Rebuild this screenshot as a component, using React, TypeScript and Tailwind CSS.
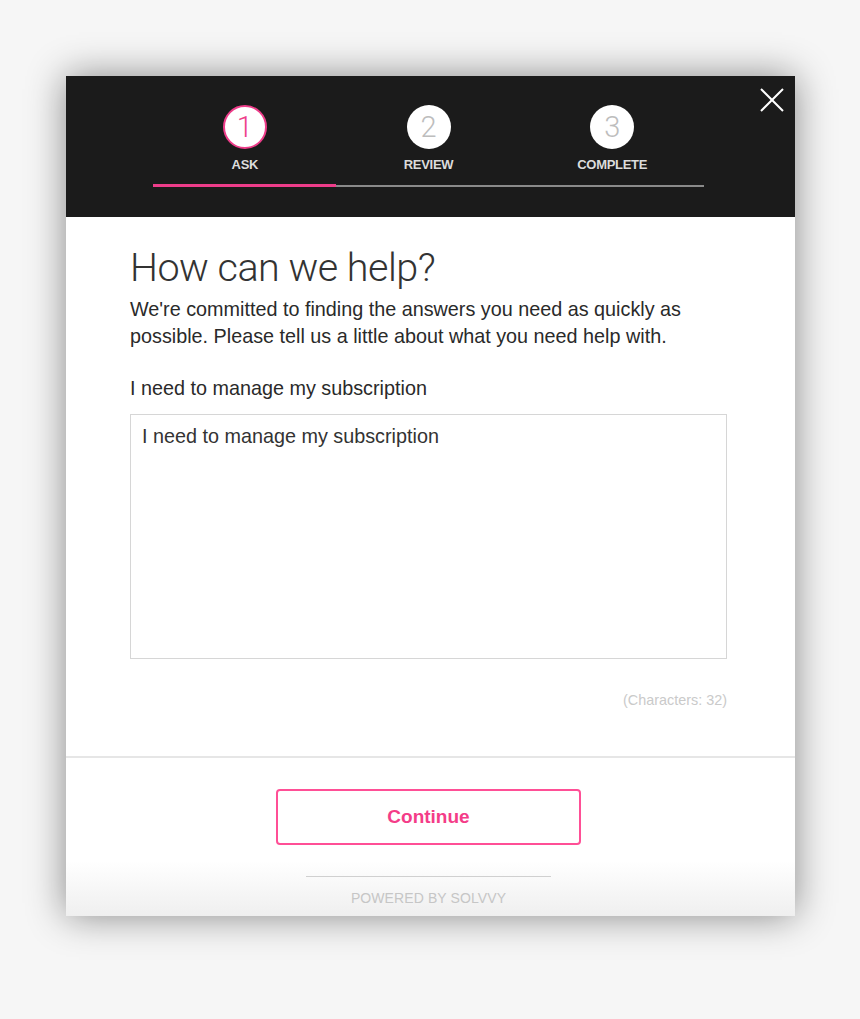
import { useState } from "react";

const STEPS = [
	{ n: 1, label: "ASK" },
	{ n: 2, label: "REVIEW" },
	{ n: 3, label: "COMPLETE" },
];

export default function App() {
	const [text, setText] = useState("I need to manage my subscription");
	const active = 1;

	return (
		<div className="min-h-[1019px] bg-[#f6f6f6] pt-[76px] pl-[66px] font-['Liberation_Sans',Arial,sans-serif]">
			<div className="w-[729px] h-[840px] flex flex-col bg-white shadow-[0_0_36px_rgba(0,0,0,0.45)]">
				{/* Header / stepper */}
				<div className="relative h-[141px] bg-[#1b1b1b] pt-[29px] pl-[87px]">
					<div className="flex w-[551px]">
						{STEPS.map((s) => (
							<div key={s.n} className="flex flex-col items-center w-[184px]">
								<div
									className={`w-[44px] h-[44px] rounded-full bg-white flex items-center justify-center text-[29px] font-['Roboto',sans-serif] font-light leading-none ${s.n === active ? "border-2 border-[#ee3d8a] text-[#ee3d8a]" : "text-[#bdbdbd]"}`}
								>
									{s.n}
								</div>
								<span className="mt-[9px] text-[13px] font-bold tracking-[-0.3px] text-[#dcdcdc] leading-none">
									{s.label}
								</span>
							</div>
						))}
					</div>
					<div className="mt-[13px] w-[551px] h-[3px] flex items-center">
						<div className="w-[183px] h-[3px] bg-[#ee3d8a]" />
						<div className="flex-1 h-[2px] bg-[#8a8a8a]" />
					</div>
					<button type="button" className="absolute top-[12px] right-[11px] w-[24px] h-[24px]">
						<svg viewBox="0 0 24 24" className="w-[24px] h-[24px]">
							<path d="M1 1 L23 23 M23 1 L1 23" stroke="#ffffff" strokeWidth="2" fill="none" />
						</svg>
					</button>
				</div>

				{/* Body */}
				<div className="flex-1 flex flex-col pl-[64px] pr-[68px] pt-[27px] border-b-2 border-[#e6e6e6]">
					<h1 className="text-[39.5px] font-['Roboto',sans-serif] font-light text-[#333] leading-[48px] tracking-[-0.5px]">
						How can we help?
					</h1>
					<p className="mt-[4px] w-[580px] text-[19.8px] leading-[27px] text-[#2a2a2a]">
						We're committed to finding the answers you need as quickly as possible. Please tell us a little about what you need help with.
					</p>
					<label className="mt-[25px] text-[19.8px] leading-[27px] text-[#2a2a2a]">
						I need to manage my subscription
					</label>
					<textarea
						value={text}
						onChange={(e) => setText(e.target.value)}
						className="mt-[12px] w-[597px] h-[245px] border border-[#d6d6d6] px-[11px] py-[8px] text-[19.8px] leading-[27px] text-[#333] resize-none outline-none font-['Liberation_Sans',Arial,sans-serif]"
					/>
					<div className="mt-[31px] text-right text-[14.4px] text-[#cacaca]">
						(Characters: {text.length})
					</div>
				</div>

				{/* Footer */}
				<div className="h-[158px] flex flex-col items-center pt-[31px] pr-[4px] bg-gradient-to-b from-white from-[65%] to-[#efefef]">
					<button
						type="button"
						className="w-[305px] h-[56px] border-2 border-[#ff4f96] rounded-[4px] text-[19px] font-bold text-[#f43c88] bg-white"
					>
						Continue
					</button>
					<div className="mt-[31px] w-[245px] h-px bg-[#d0d0d0]" />
					<div className="mt-[11px] text-[14px] text-[#c6c6c6] tracking-[0.1px]">POWERED BY SOLVVY</div>
				</div>
			</div>
		</div>
	);
}
